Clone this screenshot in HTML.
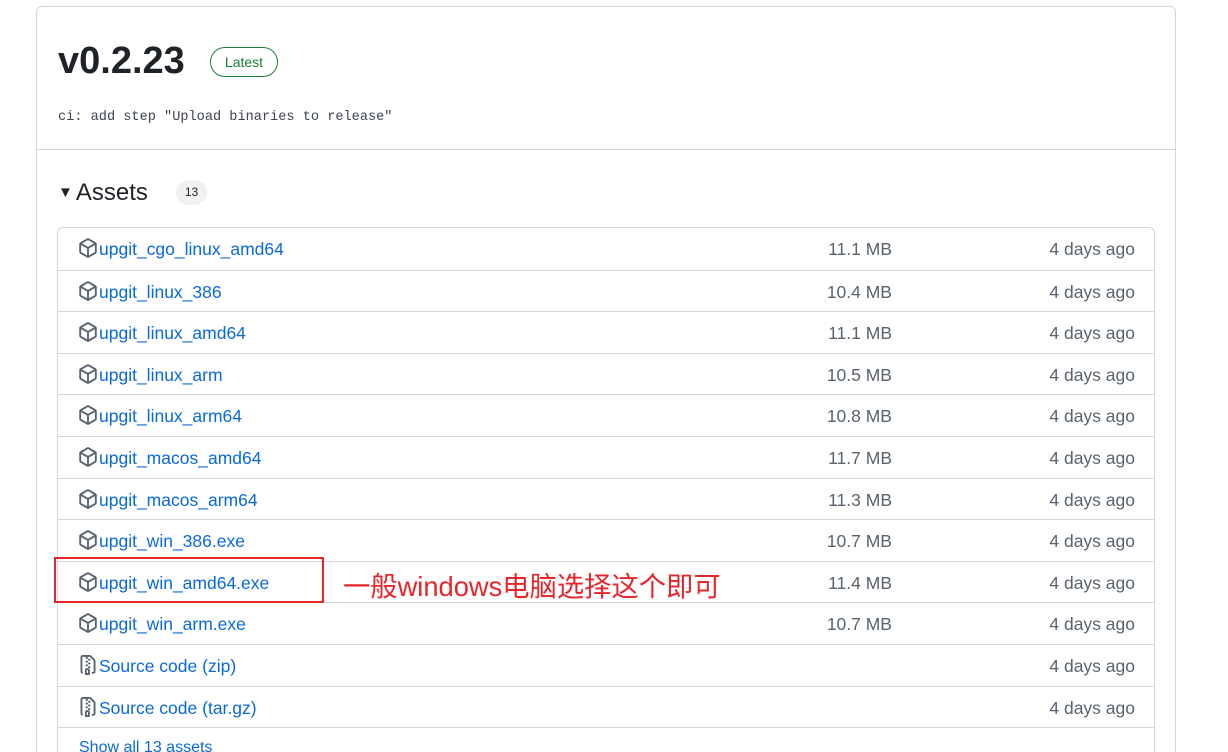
<!DOCTYPE html>
<html><head><meta charset="utf-8"><style>
html,body{margin:0;background:#fff;font-family:"Liberation Sans","Noto Sans CJK SC",sans-serif;width:1228px;height:752px;overflow:hidden;position:relative}
.card{position:absolute;left:36px;top:6px;width:1138px;height:800px;border:1px solid #d0d7de;border-radius:6px}
.hdr{height:142px;border-bottom:1px solid #d0d7de;position:relative}
h1{position:absolute;left:21px;top:33px;margin:0;font-size:38px;font-weight:600;color:#1f2328;letter-spacing:0px}
.latest{position:absolute;left:173px;top:40px;width:66px;height:28px;border:1px solid #1a7f37;border-radius:15px;color:#1a7f37;font-size:14px;line-height:28px;text-align:center}
.msg{position:absolute;left:21px;top:103px;font-family:"Liberation Mono",monospace;font-size:13.6px;color:#3d444d}
.assets{position:absolute;left:21px;top:172px;font-size:24px;font-weight:400;color:#1f2328}
.assets .tri{font-size:15px;vertical-align:3px;margin-right:3px}
.cnt{position:absolute;left:139px;top:173px;width:31px;height:25px;border-radius:13px;background:#eff1f3;font-size:12px;line-height:25px;text-align:center;color:#1f2328}
.list{position:absolute;left:20px;top:220px;width:1096px;border:1px solid #d0d7de;border-radius:6px}
.row{height:41.6px;box-sizing:border-box;border-top:1px solid #d0d7de;position:relative;font-size:17.5px}
.row:first-child{border-top:none}
.row .ic{position:absolute;left:20px;top:10px}
.row .n{position:absolute;left:41px;top:11px;color:#0969da}
.row .n span{font-weight:400;color:#0969da}
.row .s{position:absolute;right:262px;top:11px;color:#59636e}
.row .d{position:absolute;right:19px;top:11px;color:#59636e}
.red{position:absolute;left:54px;top:557px;width:270px;height:46px;border:2px solid #e5262b;box-sizing:border-box}
.note{position:absolute;left:343px;top:564px;font-size:27.3px;color:#e5262b}
</style></head><body>
<div class="card">
<div class="hdr">
<h1>v0.2.23</h1>
<div class="latest">Latest</div>
<div class="msg">ci: add step "Upload binaries to release"</div>
</div>
<div class="assets"><span class="tri">▼</span>Assets</div>
<div class="cnt">13</div>
<div class="list">
<div class="row"><svg class="ic" width="20" height="20" viewBox="0 0 16 16"><use href="#pk"/></svg><span class="n">upgit_cgo_linux_amd64</span><span class="s">11.1 MB</span><span class="d">4 days ago</span></div>
<div class="row"><svg class="ic" width="20" height="20" viewBox="0 0 16 16"><use href="#pk"/></svg><span class="n">upgit_linux_386</span><span class="s">10.4 MB</span><span class="d">4 days ago</span></div>
<div class="row"><svg class="ic" width="20" height="20" viewBox="0 0 16 16"><use href="#pk"/></svg><span class="n">upgit_linux_amd64</span><span class="s">11.1 MB</span><span class="d">4 days ago</span></div>
<div class="row"><svg class="ic" width="20" height="20" viewBox="0 0 16 16"><use href="#pk"/></svg><span class="n">upgit_linux_arm</span><span class="s">10.5 MB</span><span class="d">4 days ago</span></div>
<div class="row"><svg class="ic" width="20" height="20" viewBox="0 0 16 16"><use href="#pk"/></svg><span class="n">upgit_linux_arm64</span><span class="s">10.8 MB</span><span class="d">4 days ago</span></div>
<div class="row"><svg class="ic" width="20" height="20" viewBox="0 0 16 16"><use href="#pk"/></svg><span class="n">upgit_macos_amd64</span><span class="s">11.7 MB</span><span class="d">4 days ago</span></div>
<div class="row"><svg class="ic" width="20" height="20" viewBox="0 0 16 16"><use href="#pk"/></svg><span class="n">upgit_macos_arm64</span><span class="s">11.3 MB</span><span class="d">4 days ago</span></div>
<div class="row"><svg class="ic" width="20" height="20" viewBox="0 0 16 16"><use href="#pk"/></svg><span class="n">upgit_win_386.exe</span><span class="s">10.7 MB</span><span class="d">4 days ago</span></div>
<div class="row"><svg class="ic" width="20" height="20" viewBox="0 0 16 16"><use href="#pk"/></svg><span class="n">upgit_win_amd64.exe</span><span class="s">11.4 MB</span><span class="d">4 days ago</span></div>
<div class="row"><svg class="ic" width="20" height="20" viewBox="0 0 16 16"><use href="#pk"/></svg><span class="n">upgit_win_arm.exe</span><span class="s">10.7 MB</span><span class="d">4 days ago</span></div>
<div class="row"><svg class="ic" width="20" height="20" viewBox="0 0 16 16"><use href="#zp"/></svg><span class="n">Source code <span>(zip)</span></span><span class="d">4 days ago</span></div>
<div class="row"><svg class="ic" width="20" height="20" viewBox="0 0 16 16"><use href="#zp"/></svg><span class="n">Source code <span>(tar.gz)</span></span><span class="d">4 days ago</span></div>
<div class="row"><span class="n" style="left:21px;font-size:16px">Show all 13 assets</span></div>
</div>
</div>
<svg width="0" height="0" style="position:absolute"><defs>
<path id="pk" fill="#59636e" d="m8.878.392 5.25 3.045c.54.314.872.89.872 1.514v6.098a1.75 1.75 0 0 1-.872 1.514l-5.25 3.045a1.75 1.75 0 0 1-1.756 0l-5.25-3.045A1.75 1.750 0 0 1 1 11.049V4.951c0-.624.332-1.2.872-1.514L7.122.392a1.75 1.75 0 0 1 1.756 0ZM7.875 1.69l-4.63 2.685L8 7.133l4.755-2.758-4.630-2.685a.248.248 0 0 0-.25 0ZM2.5 5.677v5.372c0 .09.047.171.125.216l4.625 2.683V8.432Zm6.25 8.271 4.625-2.683a.25.25 0 0 0 .125-.216V5.677L8.75 8.432Z"/>
<path id="zp" fill="#59636e" d="M3.5 1.75v11.5c0 .09.048.173.126.217a.75.75 0 0 1-.752 1.298A1.748 1.748 0 0 1 2 13.25V1.75C2 .784 2.784 0 3.75 0h5.586c.464 0 .909.185 1.237.513l2.914 2.914c.329.328.513.773.513 1.237v8.586A1.75 1.75 0 0 1 12.25 15h-.5a.75.75 0 0 1 0-1.5h.5a.25.25 0 0 0 .25-.25V4.664a.25.25 0 0 0-.073-.177L9.513 1.573a.25.25 0 0 0-.177-.073H7.250a.75.75 0 0 1 0 1.5h-.5a.75.75 0 0 1 0-1.5h-3a.25.25 0 0 0-.25.25Zm3.75 8.75h.5c.966 0 1.75.784 1.75 1.75v3a.75.75 0 0 1-.75.75h-2.5a.75.75 0 0 1-.75-.75v-3c0-.966.784-1.750 1.75-1.75ZM6 5.25a.75.75 0 0 1 .75-.75h.5a.75.75 0 0 1 0 1.5h-.5A.75.75 0 0 1 6 5.25Zm.75 2.25h.5a.75.75 0 0 1 0 1.5h-.5a.75.75 0 0 1 0-1.5ZM8 6.75A.75.75 0 0 1 8.75 6h.5a.75.75 0 0 1 0 1.5h-.5A.75.75 0 0 1 8 6.75ZM8.75 3h.5a.75.75 0 0 1 0 1.5h-.5a.75.75 0 0 1 0-1.5ZM8 9.75A.75.75 0 0 1 8.75 9h.5a.75.75 0 0 1 0 1.5h-.5A.75.75 0 0 1 8 9.75Zm-1 2.5v2.25h1v-2.25a.25.25 0 0 0-.25-.25h-.5a.25.25 0 0 0-.25.25Z"/>
</defs></svg>
<div class="red"></div>
<div class="note">一般windows电脑选择这个即可</div>
</body></html>
